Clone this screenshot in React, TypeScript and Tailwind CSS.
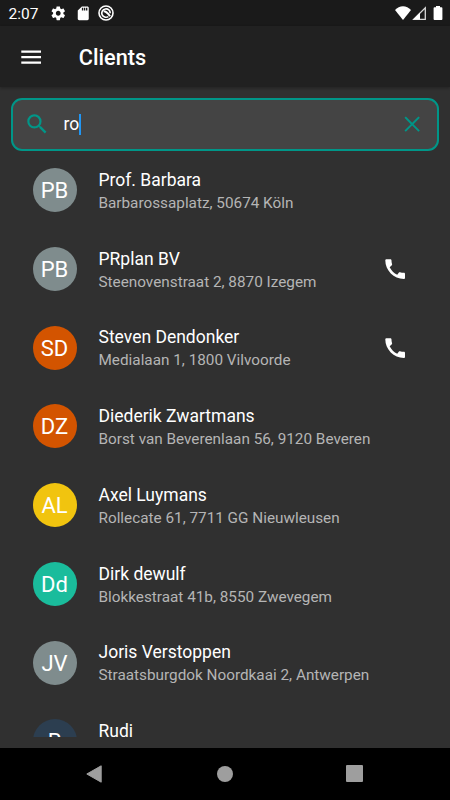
type Client = { initials: string; name: string; address?: string; color: string; phone?: boolean };

const clients: Client[] = [
  { initials: 'PB', name: 'Prof. Barbara', address: 'Barbarossaplatz, 50674 Köln', color: 'bg-[#7f8c8d]' },
  { initials: 'PB', name: 'PRplan BV', address: 'Steenovenstraat 2, 8870 Izegem', color: 'bg-[#7f8c8d]', phone: true },
  { initials: 'SD', name: 'Steven Dendonker', address: 'Medialaan 1, 1800 Vilvoorde', color: 'bg-[#d35400]', phone: true },
  { initials: 'DZ', name: 'Diederik Zwartmans', address: 'Borst van Beverenlaan 56, 9120 Beveren', color: 'bg-[#d35400]' },
  { initials: 'AL', name: 'Axel Luymans', address: 'Rollecate 61, 7711 GG Nieuwleusen', color: 'bg-[#f1c40f]' },
  { initials: 'Dd', name: 'Dirk dewulf', address: 'Blokkestraat 41b, 8550 Zwevegem', color: 'bg-[#1abc9c]' },
  { initials: 'JV', name: 'Joris Verstoppen', address: 'Straatsburgdok Noordkaai 2, Antwerpen', color: 'bg-[#7f8c8d]' },
  { initials: 'R', name: 'Rudi', color: 'bg-[#2c3e50]' },
];

function Icon({ d, className }: { d: string; className: string }) {
  return (
    <svg viewBox="0 0 24 24" fill="currentColor" className={`shrink-0 ${className}`}>
      <path d={d} />
    </svg>
  );
}

const gear =
  'M19.43 12.98c.04-.32.07-.64.07-.98s-.03-.66-.07-.98l2.11-1.65c.19-.15.24-.42.12-.64l-2-3.46c-.12-.22-.39-.3-.61-.22l-2.49 1c-.52-.4-1.08-.73-1.69-.98l-.38-2.65C14.46 2.18 14.25 2 14 2h-4c-.25 0-.46.18-.49.42l-.38 2.65c-.61.25-1.17.59-1.69.98l-2.49-1c-.23-.09-.49 0-.61.22l-2 3.46c-.13.22-.07.49.12.64l2.11 1.65c-.04.32-.07.65-.07.98s.03.66.07.98l-2.11 1.65c-.19.15-.24.42-.12.64l2 3.46c.12.22.39.3.61.22l2.49-1c.52.4 1.08.73 1.69.98l.38 2.65c.03.24.24.42.49.42h4c.25 0 .46-.18.49-.42l.38-2.65c.61-.25 1.17-.59 1.69-.98l2.49 1c.23.09.49 0 .61-.22l2-3.46c.12-.22.07-.49-.12-.64l-2.11-1.65zM12 15.5c-1.93 0-3.5-1.57-3.5-3.5s1.57-3.5 3.5-3.5 3.5 1.57 3.5 3.5-1.57 3.5-3.5 3.5z';
const sdCard = 'M18 2h-8L4.02 8 4 20c0 1.1.9 2 2 2h12c1.1 0 2-.9 2-2V4c0-1.1-.9-2-2-2zm-6 6h-2V4h2v4zm3 0h-2V4h2v4zm3 0h-2V4h2v4z';
const phone =
  'M20.01 15.38c-1.23 0-2.42-.2-3.53-.56-.35-.12-.74-.03-1.01.24l-1.57 1.97c-2.83-1.35-5.48-3.9-6.89-6.83l1.95-1.66c.27-.28.35-.67.24-1.02-.37-1.11-.56-2.3-.56-3.53 0-.54-.45-.99-.99-.99H4.19C3.65 3 3 3.24 3 3.99 3 13.28 10.73 21 20.01 21c.71 0 .99-.63.99-1.18v-3.45c0-.54-.45-.99-.99-.99z';
const search =
  'M15.5 14h-.79l-.28-.27A6.471 6.471 0 0 0 16 9.5 6.5 6.5 0 1 0 9.5 16c1.61 0 3.09-.59 4.23-1.57l.27.28v.79l5 4.99L20.49 19l-4.99-5zm-6 0C7.01 14 5 11.99 5 9.5S7.01 5 9.5 5 14 7.01 14 9.5 11.99 14 9.5 14z';

function StatusBar() {
  return (
    <div className="flex h-[26px] shrink-0 items-center bg-[#1a1a1a] pl-[8.5px] pr-[7.5px] text-white">
      <span className="w-[41.5px] translate-y-px text-[15.5px] leading-[26px]">2:07</span>
      <Icon d={gear} className="size-[16.5px]" />
      <Icon d={sdCard} className="ml-[8px] size-[16.5px]" />
      <svg viewBox="0 0 16 16" fill="none" stroke="currentColor" className="ml-[7px] size-4">
        <circle cx="8" cy="8" r="7" strokeWidth="1.6" />
        <path d="M10.3 11.6A4.2 4.2 0 1 1 12.2 8.3" strokeWidth="1.6" />
        <path d="M5.6 6.2C7.300 6.200 9.500 7.500 12 11.200" strokeWidth="2" />
      </svg>
      <svg viewBox="0 0 16 14" fill="currentColor" className="ml-auto h-[14px] w-4">
        <path d="M8 14L0 4.1C2.2 1.7 5 .3 8 .3s5.800 1.400 8 3.800z" />
      </svg>
      <svg viewBox="0 0 14 14" className="ml-[1px] h-[14px] w-[14px]">
        <path d="M1.700 13.300H13.300V1.700z" fill="none" stroke="#d8d8d8" strokeWidth="1.300" />
        <path d="M1 13.600L8 6.500V13.600z" fill="white" />
      </svg>
      <svg viewBox="0 0 10 14" fill="currentColor" className="ml-[7px] h-[14px] w-[10px]">
        <path d="M3 0h4v1.300h1.500q.9 0 .9.900v10.900q0 .9-.9.900h-7q-.9 0-.9-.9V2.200q0-.9.9-.9H3z" />
      </svg>
    </div>
  );
}

function ClientRow({ client }: { client: Client }) {
  return (
    <li className="flex h-[78.75px] shrink-0 items-start pl-[32.5px] pr-[42px] pt-[17px]">
      <div className={`flex size-[44px] shrink-0 items-center justify-center rounded-full text-[22px] leading-none text-white ${client.color}`}>
        <span className="translate-y-px">{client.initials}</span>
      </div>
      <div className="-mt-[0.2px] ml-[22px] min-w-0 flex-1 whitespace-nowrap">
        <div className="text-[17.5px] leading-[24px] text-white">{client.name}</div>
        {client.address && <div className="text-[15.3px] leading-[22px] text-[#b5b5b5]">{client.address}</div>}
      </div>
      {client.phone && <Icon d={phone} className="mt-[9.2px] size-[26.3px] text-white" />}
    </li>
  );
}

export default function App() {
  return (
    <div className="flex h-[800px] w-[450px] flex-col overflow-hidden bg-[#303030] font-['Roboto',sans-serif]">
      <StatusBar />
      <header className="z-10 flex h-[61px] shrink-0 items-center bg-[#212121] pl-[17.5px] text-white shadow-[0_1px_3px_rgba(0,0,0,0.3)]">
        <Icon d="M3 18h18v-2H3v2zm0-5h18v-2H3v2zm0-7v2h18V6H3z" className="mt-px size-[26.3px]" />
        <h1 className="ml-[35px] translate-y-px text-[21.7px] font-medium leading-[26px]">Clients</h1>
      </header>
      <div className="mx-[11px] mt-[11px] flex h-[53px] shrink-0 items-center rounded-[11px] border-2 border-[#009688] bg-[#444444] pl-[10.7px] pr-[11.5px] text-[#009688]">
        <Icon d={search} className="size-[26.3px]" />
        <span className="-mt-[2px] ml-[13.5px] text-[17.5px] leading-[22px] text-white">ro</span>
        <span className="-mt-px h-[21px] w-[2px] bg-[#2196f3]" />
        <Icon
          d="M19 6.250L17.750 5 12 10.750 6.250 5 5 6.250 10.750 12 5 17.750 6.250 19 12 13.250 17.750 19 19 17.750 13.250 12z"
          className="ml-auto size-[26.3px]"
        />
      </div>
      <ul className="flex h-[586px] shrink-0 flex-col overflow-hidden">
        {clients.map((c, i) => (
          <ClientRow key={i} client={c} />
        ))}
      </ul>
      <nav className="mt-auto flex h-[52.5px] shrink-0 items-center bg-black pl-[86px] text-[#9e9e9e]">
        <svg viewBox="0 0 16 18" fill="currentColor" stroke="currentColor" strokeLinejoin="round" className="h-[18px] w-4">
          <path d="M.8 9L15.200.8V17.200z" />
        </svg>
        <span className="ml-[115px] size-4 rounded-full bg-[#9e9e9e]" />
        <span className="ml-[113px] size-[17px] rounded-[1px] bg-[#9e9e9e]" />
      </nav>
    </div>
  );
}
